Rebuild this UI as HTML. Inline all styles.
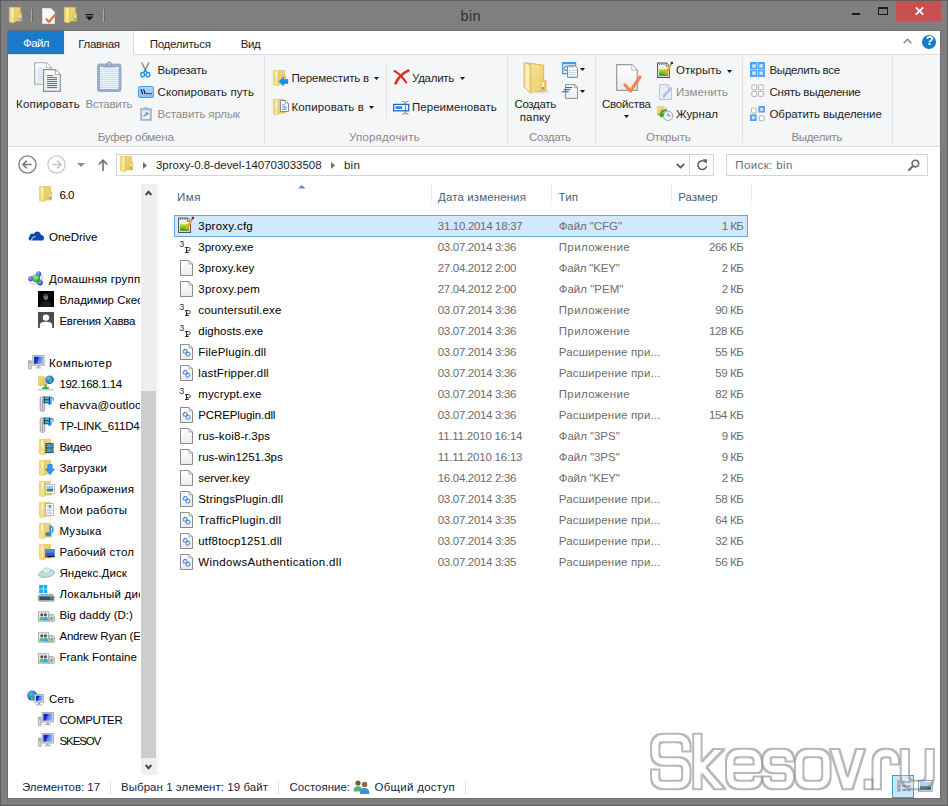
<!DOCTYPE html>
<html><head><meta charset="utf-8"><title>bin</title>
<style>
html,body{margin:0;padding:0;}
body{width:948px;height:806px;overflow:hidden;position:relative;background:#7f7f7f;font-family:"Liberation Sans",sans-serif;font-size:12px;}
.a{position:absolute;}
.t{position:absolute;white-space:pre;line-height:16px;height:16px;font-size:11.5px;}
svg{position:absolute;overflow:visible;}

</style></head>
<body>
<svg width="0" height="0" style="left:0;top:0"><defs>
<linearGradient id="gF" x1="0" y1="0" x2="1" y2="0"><stop offset="0" stop-color="#edd46a"/><stop offset="0.5" stop-color="#f6e89c"/><stop offset="1" stop-color="#e6c95c"/></linearGradient>
<linearGradient id="gB" x1="0" y1="0" x2="1" y2="1"><stop offset="0" stop-color="#f1dd86"/><stop offset="1" stop-color="#e2bd48"/></linearGradient>
<linearGradient id="gD" x1="0" y1="0" x2="0" y2="1"><stop offset="0" stop-color="#ffffff"/><stop offset="1" stop-color="#ececec"/></linearGradient>
<linearGradient id="gG" x1="0" y1="0" x2="0" y2="1"><stop offset="0" stop-color="#d9ec4a"/><stop offset="0.8" stop-color="#3cb52a"/><stop offset="1" stop-color="#0b5a10"/></linearGradient>
<linearGradient id="gS" x1="0" y1="0" x2="1" y2="0.35"><stop offset="0" stop-color="#0a16b4"/><stop offset="0.48" stop-color="#1a30d8"/><stop offset="0.58" stop-color="#5578ea"/><stop offset="1" stop-color="#8aa8f4"/></linearGradient>
<linearGradient id="gP" x1="0" y1="0" x2="0" y2="1"><stop offset="0" stop-color="#b4d8fc"/><stop offset="1" stop-color="#86bdf8"/></linearGradient>
<radialGradient id="gGl" cx="0.4" cy="0.35" r="0.7"><stop offset="0" stop-color="#6ab8ff"/><stop offset="1" stop-color="#0a3fc0"/></radialGradient>
<radialGradient id="gGr" cx="0.4" cy="0.35" r="0.7"><stop offset="0" stop-color="#9af08a"/><stop offset="1" stop-color="#0f8a1c"/></radialGradient>
<radialGradient id="gBl" cx="0.4" cy="0.35" r="0.7"><stop offset="0" stop-color="#9fb4ff"/><stop offset="1" stop-color="#1c34c4"/></radialGradient>
<linearGradient id="gF2" x1="0" y1="0" x2="1" y2="0"><stop offset="0" stop-color="#f3df8c"/><stop offset="0.5" stop-color="#fcf4cc"/><stop offset="1" stop-color="#f0d978"/></linearGradient>
<linearGradient id="gB2" x1="0" y1="0" x2="1" y2="1"><stop offset="0" stop-color="#f8ecb4"/><stop offset="0.6" stop-color="#eed377"/><stop offset="1" stop-color="#e6c25a"/></linearGradient>
</defs></svg>
<div class="a" style="left:0px;top:0px;width:948px;height:806px;background:#7f7f7f;box-shadow:inset 0 0 0 1px #5f5f5f;"></div>
<div class="a" style="left:7px;top:30px;width:934px;height:769px;background:#6f6f6f;"></div>
<div class="a" style="left:8px;top:31px;width:932px;height:767px;background:#fff;"></div>
<span class="t" style="left:460.55px;top:7.70px;color:#303030;letter-spacing:0.443px;font-size:14.38px;">bin</span>
<svg style="left:9px;top:7px" width="13" height="16" viewBox="0 0 13 16"><path d="M5.6 0.4 H11.4 V6 H12.6 V14 H5.6 Z" fill="url(#gB)" stroke="#dfbf4e" stroke-width="0.7"/><path d="M0.4 0.4 H6.3 V15 L3.6 15.7 L0.4 14.8 Z" fill="url(#gF)" stroke="#e5cb66" stroke-width="0.7"/><rect x="3" y="1.5" width="1.1" height="6" fill="#fffbe6" opacity="0.9"/><rect x="10.6" y="8" width="1.1" height="3" fill="#f4f7fb"/><rect x="10.6" y="10.6" width="1.1" height="2.2" fill="#3d9be0"/></svg>
<div class="a" style="left:31px;top:9px;width:1px;height:13px;background:#a8a8a8;"></div>
<div class="a" style="left:32px;top:9px;width:1px;height:13px;background:#666;"></div>
<svg style="left:42px;top:8px" width="14" height="16" viewBox="0 0 14 16"><path d="M0.5 0.5 H9 L12.5 4 V15.5 H0.5 Z" fill="#f7f7f7" stroke="#e8e8e8" stroke-width="0.8"/><path d="M4.5 11.2 L7 14 L12.8 7" fill="none" stroke="#e8753a" stroke-width="2.2" stroke-linecap="round" stroke-linejoin="round"/></svg>
<svg style="left:64px;top:7px" width="13" height="16" viewBox="0 0 13 16"><path d="M5.6 0.4 H11.4 V6 H12.6 V14 H5.6 Z" fill="url(#gB)" stroke="#dfbf4e" stroke-width="0.7"/><path d="M0.4 0.4 H6.3 V15 L3.6 15.7 L0.4 14.8 Z" fill="url(#gF)" stroke="#e5cb66" stroke-width="0.7"/><rect x="3" y="1.5" width="1.1" height="6" fill="#fffbe6" opacity="0.9"/><rect x="10.6" y="8" width="1.1" height="3" fill="#f4f7fb"/><rect x="10.6" y="10.6" width="1.1" height="2.2" fill="#3d9be0"/></svg>
<svg style="left:85px;top:14px" width="9" height="7" viewBox="0 0 9 7"><rect x="0.5" y="0" width="8" height="1.2" fill="#111"/><path d="M0.5 2.6 H8.5 L4.5 6.4 Z" fill="#111"/></svg>
<div class="a" style="left:103px;top:9px;width:1px;height:13px;background:#a8a8a8;"></div>
<div class="a" style="left:104px;top:9px;width:1px;height:13px;background:#666;"></div>
<div class="a" style="left:852px;top:13px;width:8px;height:2px;background:#1b1b1b;"></div>
<div class="a" style="left:878px;top:7px;width:10px;height:8px;box-sizing:border-box;border:1px solid #1b1b1b;border-top-width:2px;"></div>
<div class="a" style="left:896px;top:1px;width:45px;height:20px;background:#c75050;"></div>
<svg style="left:914.5px;top:7.3px" width="9" height="8" viewBox="0 0 9 8"><path d="M0.8 0.4 L8.2 7.6 M8.2 0.4 L0.8 7.6" stroke="#fff" stroke-width="1.8" fill="none"/></svg>
<div class="a" style="left:8px;top:31px;width:932px;height:23px;background:#fff;border-bottom:1px solid #dadbdc;"></div>
<div class="a" style="left:8px;top:31px;width:56px;height:23px;background:#1979ca;"></div>
<span class="t" style="left:23.00px;top:35.00px;color:#fff;letter-spacing:-0.570px;">Файл</span>
<div class="a" style="left:64px;top:31px;width:70px;height:24px;box-sizing:border-box;background:#f5f6f7;border-right:1px solid #dadbdc;border-left:1px solid #eceef0;"></div>
<span class="t" style="left:78.30px;top:36.00px;color:#1e1e1e;letter-spacing:-0.354px;">Главная</span>
<span class="t" style="left:149.70px;top:36.00px;color:#1e1e1e;letter-spacing:-0.252px;">Поделиться</span>
<span class="t" style="left:240.70px;top:36.00px;color:#1e1e1e;letter-spacing:-0.438px;">Вид</span>
<svg style="left:903px;top:38px" width="9" height="6" viewBox="0 0 9 6"><path d="M0.7 5.2 L4.5 1.3 L8.3 5.2" stroke="#8b8b8b" stroke-width="1.6" fill="none"/></svg>
<svg style="left:922px;top:35px" width="14" height="14" viewBox="0 0 14 14"><circle cx="7" cy="7" r="7" fill="#1979ca"/></svg>
<span class="t" style="left:925.80px;top:33.10px;color:#fff;letter-spacing:-0.180px;font-size:12.94px;font-weight:bold;">?</span>
<div class="a" style="left:8px;top:55px;width:932px;height:91px;background:#f5f6f7;border-bottom:1px solid #dadbdc;"></div>
<div class="a" style="left:264px;top:57px;width:1px;height:86px;background:#e1e2e3;"></div>
<div class="a" style="left:507px;top:57px;width:1px;height:86px;background:#e1e2e3;"></div>
<div class="a" style="left:595px;top:57px;width:1px;height:86px;background:#e1e2e3;"></div>
<div class="a" style="left:742px;top:57px;width:1px;height:86px;background:#e1e2e3;"></div>
<div class="a" style="left:892px;top:57px;width:1px;height:86px;background:#e1e2e3;"></div>
<div class="a" style="left:386px;top:64px;width:1px;height:54px;background:#e1e2e3;"></div>
<svg style="left:34px;top:62px" width="27" height="30" viewBox="0 0 27 30"><path d="M0.7 0.7 H12.5 L17.3 5.5 V22.3 H0.7 Z" fill="url(#gD)" stroke="#a8a8a8" stroke-width="1.1"/><path d="M12.3 0.7 V5.7 H17.3" fill="#fff" stroke="#b4b4b4" stroke-width="0.9"/><rect x="3.5" y="5.6" width="6" height="0.9" fill="#c5d9ee"/><rect x="3.5" y="7.6" width="6" height="0.9" fill="#c5d9ee"/><rect x="3.5" y="9.6" width="6" height="0.9" fill="#c5d9ee"/><rect x="3.5" y="11.6" width="6" height="0.9" fill="#c5d9ee"/><rect x="3.5" y="13.6" width="6" height="0.9" fill="#c5d9ee"/><rect x="3.5" y="15.6" width="6" height="0.9" fill="#c5d9ee"/><rect x="3.5" y="17.6" width="6" height="0.9" fill="#c5d9ee"/><path d="M9.6 7.7 H21.5 L26.3 12.5 V29.3 H9.6 Z" fill="url(#gD)" stroke="#8e8e8e" stroke-width="1.2"/><path d="M21.3 7.7 V12.7 H26.3" fill="#fff" stroke="#9a9a9a" stroke-width="0.9"/><rect x="13" y="13" width="6" height="1.1" fill="#3b82c9"/><rect x="13" y="15" width="10" height="1.1" fill="#3b82c9"/><rect x="13" y="17" width="10" height="1.1" fill="#3b82c9"/><rect x="13" y="19" width="10" height="1.1" fill="#3b82c9"/><rect x="13" y="21" width="10" height="1.1" fill="#3b82c9"/><rect x="13" y="23" width="10" height="1.1" fill="#3b82c9"/><rect x="13" y="25" width="10" height="1.1" fill="#3b82c9"/></svg>
<svg style="left:97px;top:61px" width="25" height="31" viewBox="0 0 25 31"><rect x="0.5" y="3" width="23.5" height="27.5" rx="1.8" fill="#9badca" stroke="#90a3c2" stroke-width="0.8"/><rect x="3" y="6" width="18.5" height="22" fill="#eef3fb"/><rect x="3" y="8" width="18.5" height="0.9" fill="#cdd9ec"/><rect x="3" y="10" width="18.5" height="0.9" fill="#cdd9ec"/><rect x="3" y="12" width="18.5" height="0.9" fill="#cdd9ec"/><rect x="3" y="14" width="18.5" height="0.9" fill="#cdd9ec"/><rect x="3" y="16" width="18.5" height="0.9" fill="#cdd9ec"/><rect x="3" y="18" width="18.5" height="0.9" fill="#cdd9ec"/><rect x="3" y="20" width="18.5" height="0.9" fill="#cdd9ec"/><rect x="3" y="22" width="18.5" height="0.9" fill="#cdd9ec"/><rect x="3" y="24" width="18.5" height="0.9" fill="#cdd9ec"/><rect x="3" y="26" width="18.5" height="0.9" fill="#cdd9ec"/><path d="M6 6.3 H18.5 V5 H15.5 C15.5 2.5 14 0.8 12.2 0.8 C10.4 0.8 9 2.5 9 5 H6 Z" fill="#8d9fbe" stroke="#a9b7d1" stroke-width="0.6"/><circle cx="12.2" cy="3" r="1" fill="#dfe6f2"/></svg>
<span class="t" style="left:16.00px;top:96.00px;color:#1e1e1e;letter-spacing:0.208px;">Копировать</span>
<span class="t" style="left:85.60px;top:96.00px;color:#8d8d8d;letter-spacing:-0.281px;">Вставить</span>
<svg style="left:140px;top:62px" width="11" height="16" viewBox="0 0 11 16"><path d="M1.6 0.3 L6.2 9.6 M9 0.3 L4.4 9.6" stroke="#8b9097" stroke-width="1.5" fill="none"/><ellipse cx="2.6" cy="12.6" rx="1.9" ry="2.3" fill="none" stroke="#1d8de0" stroke-width="1.3"/><ellipse cx="7.9" cy="12.6" rx="1.9" ry="2.3" fill="none" stroke="#1d8de0" stroke-width="1.3"/><path d="M3.5 10.6 L5.3 8 L7 10.6" stroke="#1d8de0" stroke-width="1.3" fill="none"/></svg>
<span class="t" style="left:157.50px;top:62.00px;color:#1e1e1e;letter-spacing:-0.207px;">Вырезать</span>
<svg style="left:138px;top:86px" width="16" height="12" viewBox="0 0 16 12"><rect x="0.5" y="0.5" width="15" height="11" rx="1.6" fill="url(#gP)" stroke="#4aa0ee" stroke-width="1"/><path d="M3 3.2 L4.6 8 M5.6 3.2 L7.2 8" stroke="#111" stroke-width="1.1"/><rect x="8.3" y="7" width="1.2" height="1.2" fill="#111"/><rect x="10.4" y="7" width="1.2" height="1.2" fill="#111"/><rect x="12.5" y="7" width="1.2" height="1.2" fill="#111"/></svg>
<span class="t" style="left:157.50px;top:84.00px;color:#1e1e1e;letter-spacing:0.086px;">Скопировать путь</span>
<svg style="left:140px;top:107px" width="12" height="14" viewBox="0 0 12 14"><rect x="0.6" y="1.6" width="10.8" height="11.8" fill="#a9b6cf" stroke="#9fadc8" stroke-width="0.6"/><rect x="2.2" y="3.3" width="7.6" height="8.6" fill="#eef2f9"/><rect x="3.8" y="0.3" width="4.4" height="2" fill="#a9b6cf"/><path d="M4 10 C4 7.5 5.5 6.6 7.6 6.6 M5.6 5 L8.2 6.6 L5.8 8.4" stroke="#8c97ad" stroke-width="1.2" fill="none"/></svg>
<span class="t" style="left:157.50px;top:106.00px;color:#8d8d8d;letter-spacing:-0.121px;">Вставить ярлык</span>
<span class="t" style="left:97.70px;top:129.00px;color:#8a8a8a;letter-spacing:-0.180px;">Буфер обмена</span>
<svg style="left:273px;top:70px" width="13" height="16" viewBox="0 0 13 16"><path d="M5.6 0.4 H11.4 V6 H12.6 V14 H5.6 Z" fill="url(#gB)" stroke="#dfbf4e" stroke-width="0.7"/><path d="M0.4 0.4 H6.3 V15 L3.6 15.7 L0.4 14.8 Z" fill="url(#gF)" stroke="#e5cb66" stroke-width="0.7"/><rect x="3" y="1.5" width="1.1" height="6" fill="#fffbe6" opacity="0.9"/><rect x="10.6" y="8" width="1.1" height="3" fill="#f4f7fb"/><rect x="10.6" y="10.6" width="1.1" height="2.2" fill="#3d9be0"/></svg>
<svg style="left:279px;top:77px" width="9" height="9" viewBox="0 0 9 9"><path d="M0 4.5 L4.5 0 V2.5 H9 V6.5 H4.5 V9 Z" fill="#1e8de6" stroke="#1576cc" stroke-width="0.5"/></svg>
<span class="t" style="left:291.50px;top:70.00px;color:#1e1e1e;letter-spacing:-0.174px;">Переместить в</span>
<svg style="left:373.5px;top:77px" width="5" height="3" viewBox="0 0 5 3"><path d="M0 0 H5 L2.5 3 Z" fill="#111"/></svg>
<svg style="left:273px;top:99px" width="13" height="16" viewBox="0 0 13 16"><path d="M5.6 0.4 H11.4 V6 H12.6 V14 H5.6 Z" fill="url(#gB)" stroke="#dfbf4e" stroke-width="0.7"/><path d="M0.4 0.4 H6.3 V15 L3.6 15.7 L0.4 14.8 Z" fill="url(#gF)" stroke="#e5cb66" stroke-width="0.7"/><rect x="3" y="1.5" width="1.1" height="6" fill="#fffbe6" opacity="0.9"/><rect x="10.6" y="8" width="1.1" height="3" fill="#f4f7fb"/><rect x="10.6" y="10.6" width="1.1" height="2.2" fill="#3d9be0"/></svg>
<svg style="left:279.5px;top:99.5px" width="9" height="12" viewBox="0 0 9 12"><path d="M0.5 0.5 H5.5 L8.5 3.5 V11.5 H0.5 Z" fill="#fff" stroke="#8a8a8a" stroke-width="1"/><path d="M5.3 0.5 V3.7 H8.5" fill="none" stroke="#9a9a9a" stroke-width="0.8"/><rect x="2.3" y="4.4" width="2.4" height="1" fill="#3b82c9"/><rect x="2.3" y="6.5" width="4.4" height="1" fill="#3b82c9"/><rect x="2.3" y="8.6" width="4.4" height="1" fill="#3b82c9"/></svg>
<span class="t" style="left:291.50px;top:99.00px;color:#1e1e1e;letter-spacing:0.105px;">Копировать в</span>
<svg style="left:368.5px;top:106px" width="5" height="3" viewBox="0 0 5 3"><path d="M0 0 H5 L2.5 3 Z" fill="#111"/></svg>
<svg style="left:394px;top:70px" width="15" height="14" viewBox="0 0 15 14"><path d="M0.5 1 C4 2.6 9 8 12.3 12.5" stroke="#e02a1c" stroke-width="2" fill="none" stroke-linecap="round"/><path d="M14.3 0.6 C8 3.5 3.5 9 1.6 13.4" stroke="#e02a1c" stroke-width="2.6" fill="none" stroke-linecap="round"/></svg>
<span class="t" style="left:412.00px;top:70.00px;color:#1e1e1e;letter-spacing:-0.272px;">Удалить</span>
<svg style="left:459.5px;top:77px" width="5" height="3" viewBox="0 0 5 3"><path d="M0 0 H5 L2.5 3 Z" fill="#111"/></svg>
<svg style="left:393px;top:101px" width="17" height="14" viewBox="0 0 17 14"><rect x="0.7" y="3.4" width="15" height="6.4" fill="#fff" stroke="#1a6cc0" stroke-width="1.3"/><rect x="2.5" y="5.2" width="6.8" height="2.8" fill="#2e93e0"/><path d="M12.4 1 V12.4 M9.3 0.3 C11 0.5 12 0.8 12.4 1.6 C12.8 0.8 13.8 0.5 15.5 0.3 M9.3 13.2 C11 13 12 12.7 12.4 11.8 C12.8 12.7 13.8 13 15.5 13.2" stroke="#7a7a7a" stroke-width="1" fill="none"/></svg>
<span class="t" style="left:412.00px;top:99.00px;color:#1e1e1e;letter-spacing:0.030px;">Переименовать</span>
<span class="t" style="left:349.00px;top:129.00px;color:#8a8a8a;letter-spacing:0.233px;">Упорядочить</span>
<svg style="left:523px;top:62px" width="24" height="32" viewBox="0 0 24 32"><ellipse cx="19" cy="29.5" rx="8" ry="2.2" fill="#cfcfcf" opacity="0.55"/><path d="M3.8 0.9 L20.7 3.2 V18.6 H22.9 V28.8 L8 30.2 Z" fill="url(#gB2)" stroke="#ddb146" stroke-width="0.9"/><path d="M1.1 0.6 L7.9 2.8 V31.2 L1.1 25.2 Z" fill="url(#gF2)" stroke="#ddb146" stroke-width="0.9"/><path d="M7.9 19.2 H16.3 V29.4 L7.9 30.2 Z" fill="#efd87c" opacity="0.7"/><rect x="19.5" y="20.3" width="1.3" height="5" fill="#fff"/><rect x="19.5" y="25" width="1.3" height="2" fill="#2f86e0"/></svg>
<span class="t" style="left:514.40px;top:96.00px;color:#1e1e1e;letter-spacing:-0.303px;">Создать</span>
<span class="t" style="left:519.65px;top:109.00px;color:#1e1e1e;letter-spacing:0.187px;">папку</span>
<svg style="left:562px;top:62px" width="16" height="16" viewBox="0 0 16 16"><rect x="0.6" y="0.6" width="13" height="11" fill="#e4f1fc" stroke="#3f9be6" stroke-width="1.2"/><rect x="0.6" y="0.6" width="13" height="1.6" fill="#3f9be6"/><circle cx="4" cy="6.5" r="2" fill="none" stroke="#2a74c8" stroke-width="0.9"/><path d="M5.5 3.8 H13 L15.5 6 V15.4 H5.5 Z" fill="#fff" stroke="#8c8c8c" stroke-width="1"/><rect x="6.6" y="4" width="1" height="1.4" fill="#777"/><rect x="8.6" y="4" width="1" height="1.4" fill="#777"/><rect x="10.6" y="4" width="1" height="1.4" fill="#777"/><rect x="6.5" y="8" width="8" height="0.9" fill="#bcd0ea"/><rect x="6.5" y="10" width="8" height="0.9" fill="#bcd0ea"/><rect x="6.5" y="12" width="8" height="0.9" fill="#bcd0ea"/><rect x="6.5" y="14" width="8" height="0.9" fill="#bcd0ea"/></svg>
<svg style="left:580.3px;top:68px" width="5" height="3" viewBox="0 0 5 3"><path d="M0 0 H5 L2.5 3 Z" fill="#111"/></svg>
<svg style="left:562px;top:84px" width="16" height="15" viewBox="0 0 16 15"><path d="M3.6 0.6 H12.6 L15.5 3.4 V14.4 H3.6 Z" fill="url(#gD)" stroke="#8c8c8c" stroke-width="1"/><path d="M12.4 0.6 V3.6 H15.5" fill="none" stroke="#9a9a9a" stroke-width="0.8"/><rect x="3.6" y="3" width="6.6" height="1.1" fill="#1b6fe0"/><rect x="1.8" y="5.1" width="6.6" height="1.1" fill="#1b6fe0"/><rect x="0" y="7.2" width="6.6" height="1.1" fill="#1b6fe0"/></svg>
<svg style="left:580.3px;top:90px" width="5" height="3" viewBox="0 0 5 3"><path d="M0 0 H5 L2.5 3 Z" fill="#111"/></svg>
<span class="t" style="left:529.00px;top:129.00px;color:#8a8a8a;letter-spacing:-0.274px;">Создать</span>
<svg style="left:616px;top:64px" width="26" height="29" viewBox="0 0 26 29"><path d="M0.7 0.7 H16 L21.3 6 V26.3 H0.7 Z" fill="url(#gD)" stroke="#9a9a9a" stroke-width="1.2"/><path d="M15.8 0.7 V6.2 H21.3" fill="#fff" stroke="#b0b0b0" stroke-width="0.9"/><path d="M9 21 L14.5 27 L24 13" fill="none" stroke="#ee8850" stroke-width="3.2" stroke-linecap="round" stroke-linejoin="round"/></svg>
<span class="t" style="left:602.00px;top:96.00px;color:#1e1e1e;letter-spacing:-0.237px;">Свойства</span>
<svg style="left:624px;top:115.3px" width="5" height="3" viewBox="0 0 5 3"><path d="M0 0 H5 L2.5 3 Z" fill="#111"/></svg>
<svg style="left:657px;top:62px" width="16" height="16" viewBox="0 0 16 16"><path d="M0.6 1 H9.5 L12.4 4 V15.4 H0.6 Z" fill="#fff" stroke="#555" stroke-width="1.1"/><path d="M9.2 1 V4.2 H12.4" fill="#fff" stroke="#555" stroke-width="0.9"/><rect x="2" y="1.6" width="1.1" height="1.3" fill="#555"/><rect x="4.2" y="1.6" width="1.1" height="1.3" fill="#555"/><rect x="6.4" y="1.6" width="1.1" height="1.3" fill="#555"/><rect x="2.3" y="4.6" width="5.5" height="0.8" fill="#c9ced6"/><rect x="2" y="6.6" width="9" height="7" fill="url(#gG)"/><path d="M8.3 12.6 L13.3 3.6" stroke="#f5a500" stroke-width="2.2"/><path d="M8.6 12.9 L7.6 14 L9.3 13.3 Z" fill="#5a3a10"/><path d="M13.5 3.3 L14.4 1.7" stroke="#7a8aa8" stroke-width="1.6"/><rect x="13.8" y="-0.2" width="2.2" height="2.2" fill="#a00010"/></svg>
<span class="t" style="left:676.00px;top:62.00px;color:#1e1e1e;letter-spacing:0.061px;">Открыть</span>
<svg style="left:727.3px;top:69.5px" width="5" height="3" viewBox="0 0 5 3"><path d="M0 0 H5 L2.5 3 Z" fill="#111"/></svg>
<svg style="left:659px;top:84px" width="14" height="16" viewBox="0 0 14 16"><path d="M0.5 0.5 H9 L12.5 4 V15.5 H0.5 Z" fill="#e6edfa" stroke="#b5c3de" stroke-width="0.9"/><path d="M8.8 0.5 V4.2 H12.5" fill="none" stroke="#b5c3de" stroke-width="0.8"/><path d="M4.5 12.5 L11.8 4.3" stroke="#a9b8d6" stroke-width="2"/><path d="M4.7 12.3 L3.6 14 L5.6 13.2 Z" fill="#98a8c8"/></svg>
<span class="t" style="left:676.00px;top:84.00px;color:#8d8d8d;letter-spacing:0.016px;">Изменить</span>
<svg style="left:657px;top:106px" width="16" height="15" viewBox="0 0 16 15"><path d="M0.4 0.4 H7 V2 H8.6 V9 H0.4 Z" fill="url(#gB)" stroke="#e2c65c" stroke-width="0.7"/><path d="M6 1.8 H9.6 V4 H6 Z" fill="#fff" stroke="#c8c8c8" stroke-width="0.5"/><circle cx="11" cy="9.8" r="4.7" fill="#f2f6f8" stroke="#9aa7ad" stroke-width="1"/><path d="M11 6.8 V9.8 H13.6" stroke="#6d7b82" stroke-width="1" fill="none"/><path d="M9.6 4.6 C7 4.4 5.6 6 5.4 8 H7.3 L4.4 11.6 L1.6 8 H3.4 C3.6 5 6 3 9.6 3.4 Z" fill="#2db52a" stroke="#1a8a1c" stroke-width="0.4"/></svg>
<span class="t" style="left:676.00px;top:106.00px;color:#1e1e1e;letter-spacing:0.005px;">Журнал</span>
<span class="t" style="left:646.00px;top:129.00px;color:#8a8a8a;letter-spacing:-0.082px;">Открыть</span>
<svg style="left:750px;top:62px" width="15" height="15" viewBox="0 0 15 15"><rect x="0" y="0" width="15" height="15" fill="#4ea3f4"/><rect x="2.2" y="2.2" width="3.4" height="3.4" fill="#cfe6fc"/><rect x="2.2" y="9.4" width="3.4" height="3.4" fill="#cfe6fc"/><rect x="9.4" y="2.2" width="3.4" height="3.4" fill="#cfe6fc"/><rect x="9.4" y="9.4" width="3.4" height="3.4" fill="#cfe6fc"/><rect x="6.9" y="0" width="1.2" height="15" fill="#9fcdf9"/><rect x="0" y="6.9" width="15" height="1.2" fill="#9fcdf9"/></svg>
<span class="t" style="left:769.50px;top:62.00px;color:#1e1e1e;letter-spacing:-0.348px;">Выделить все</span>
<svg style="left:751px;top:84px" width="13" height="13" viewBox="0 0 13 13"><rect x="0.9" y="0.9" width="4.8" height="4.8" fill="#fff" stroke="#a9a9a9" stroke-width="0.9" rx="0.6"/><rect x="0.9" y="7.5" width="4.8" height="4.8" fill="#fff" stroke="#a9a9a9" stroke-width="0.9" rx="0.6"/><rect x="7.5" y="0.9" width="4.8" height="4.8" fill="#fff" stroke="#a9a9a9" stroke-width="0.9" rx="0.6"/><rect x="7.5" y="7.5" width="4.8" height="4.8" fill="#fff" stroke="#a9a9a9" stroke-width="0.9" rx="0.6"/></svg>
<span class="t" style="left:769.50px;top:84.00px;color:#1e1e1e;letter-spacing:-0.248px;">Снять выделение</span>
<svg style="left:750px;top:106px" width="16" height="16" viewBox="0 0 16 16"><rect x="1.5" y="2.1" width="4.8" height="4.8" fill="#fff" stroke="#a9a9a9" stroke-width="0.9" rx="0.6"/><rect x="8.4" y="0" width="6.6" height="6.6" fill="#4ea3f4"/><rect x="10.200000000000001" y="1.8" width="3" height="3" fill="#cfe6fc"/><rect x="0" y="8.4" width="6.6" height="6.6" fill="#4ea3f4"/><rect x="1.8" y="10.200000000000001" width="3" height="3" fill="#cfe6fc"/><rect x="9.3" y="9.9" width="4.8" height="4.8" fill="#fff" stroke="#a9a9a9" stroke-width="0.9" rx="0.6"/></svg>
<span class="t" style="left:769.50px;top:106.00px;color:#1e1e1e;letter-spacing:-0.072px;">Обратить выделение</span>
<span class="t" style="left:791.40px;top:129.00px;color:#8a8a8a;letter-spacing:-0.308px;">Выделить</span>
<svg style="left:18px;top:155px" width="19" height="19" viewBox="0 0 19 19"><circle cx="9.5" cy="9.5" r="8.6" fill="#fff" stroke="#7b7b7b" stroke-width="1.3"/><path d="M13.6 9.5 H5.2 M8.8 5.6 L5 9.5 L8.8 13.4" stroke="#7b7b7b" stroke-width="1.6" fill="none"/></svg>
<svg style="left:46.5px;top:155px" width="19" height="19" viewBox="0 0 19 19"><circle cx="9.5" cy="9.5" r="8.6" fill="#fff" stroke="#c8c8c8" stroke-width="1.3"/><path d="M5.4 9.5 H13.8 M10.2 5.6 L14 9.5 L10.2 13.4" stroke="#c8c8c8" stroke-width="1.6" fill="none"/></svg>
<svg style="left:77px;top:163px" width="8" height="4" viewBox="0 0 8 4"><path d="M0 0 H8 L4 4 Z" fill="#8a8a8a"/></svg>
<svg style="left:98px;top:159px" width="10" height="12" viewBox="0 0 10 12"><path d="M5 1.2 V12 M0.8 5.5 L5 1.2 L9.2 5.5" stroke="#6e6e6e" stroke-width="1.6" fill="none"/></svg>
<div class="a" style="left:116px;top:154px;width:598px;height:22px;box-sizing:border-box;border:1px solid #d5d5d5;background:#fff;"></div>
<div class="a" style="left:689px;top:155px;width:1px;height:20px;background:#d5d5d5;"></div>
<svg style="left:120px;top:156px" width="13" height="16" viewBox="0 0 13 16"><path d="M5.6 0.4 H11.4 V6 H12.6 V14 H5.6 Z" fill="url(#gB)" stroke="#dfbf4e" stroke-width="0.7"/><path d="M0.4 0.4 H6.3 V15 L3.6 15.7 L0.4 14.8 Z" fill="url(#gF)" stroke="#e5cb66" stroke-width="0.7"/><rect x="3" y="1.5" width="1.1" height="6" fill="#fffbe6" opacity="0.9"/><rect x="10.6" y="8" width="1.1" height="3" fill="#f4f7fb"/><rect x="10.6" y="10.6" width="1.1" height="2.2" fill="#3d9be0"/></svg>
<svg style="left:143px;top:162px" width="4" height="7" viewBox="0 0 4 7"><path d="M0 0 L4 3.5 L0 7 Z" fill="#707070"/></svg>
<span class="t" style="left:156.00px;top:157.00px;color:#1e1e1e;letter-spacing:-0.025px;">3proxy-0.8-devel-140703033508</span>
<svg style="left:331px;top:162px" width="4" height="7" viewBox="0 0 4 7"><path d="M0 0 L4 3.5 L0 7 Z" fill="#707070"/></svg>
<span class="t" style="left:344.00px;top:157.00px;color:#1e1e1e;letter-spacing:0.214px;">bin</span>
<svg style="left:675.5px;top:163px" width="9" height="6" viewBox="0 0 9 6"><path d="M0.8 0.8 L4.5 4.6 L8.2 0.8" stroke="#555" stroke-width="1.7" fill="none"/></svg>
<svg style="left:696px;top:159px" width="12" height="12" viewBox="0 0 12 12"><path d="M9.6 3.2 A4.4 4.4 0 1 0 10.6 7" stroke="#5f5f5f" stroke-width="1.5" fill="none"/><path d="M6.6 0.2 H11 V4.6 Z" fill="#5f5f5f"/></svg>
<div class="a" style="left:726px;top:154px;width:202px;height:22px;box-sizing:border-box;border:1px solid #d5d5d5;background:#fff;"></div>
<span class="t" style="left:735.30px;top:157.00px;color:#6d6d6d;letter-spacing:0.379px;">Поиск: bin</span>
<svg style="left:908px;top:159px" width="12" height="12" viewBox="0 0 12 12"><circle cx="7.4" cy="4.6" r="3.3" fill="none" stroke="#6a6a6a" stroke-width="1.6"/><path d="M5 7 L1 11" stroke="#6a6a6a" stroke-width="2.1" stroke-linecap="round"/></svg>
<div class="a" style="left:8px;top:184px;width:132.4px;height:591px;overflow:hidden;">
<svg style="left:31px;top:2px" width="13" height="16" viewBox="0 0 13 16"><path d="M5.6 0.4 H11.4 V6 H12.6 V14 H5.6 Z" fill="url(#gB)" stroke="#dfbf4e" stroke-width="0.7"/><path d="M0.4 0.4 H6.3 V15 L3.6 15.7 L0.4 14.8 Z" fill="url(#gF)" stroke="#e5cb66" stroke-width="0.7"/><rect x="3" y="1.5" width="1.1" height="6" fill="#fffbe6" opacity="0.9"/><rect x="10.6" y="8" width="1.1" height="3" fill="#f4f7fb"/><rect x="10.6" y="10.6" width="1.1" height="2.2" fill="#3d9be0"/></svg><span class="t" style="left:51.40px;top:3.00px;color:#000;letter-spacing:-0.467px;">6.0</span><svg style="left:20px;top:46px" width="17" height="11" viewBox="0 0 17 11"><path d="M3.2 10.6 C0.6 10.6 -0.4 7.4 1.9 6.2 C1.6 3.6 4.6 2.6 5.8 4.2 C7 0.2 12.6 0.8 12.9 5 C16.6 4.6 17.2 10.6 13.8 10.6 Z" fill="#0a49b0"/><path d="M3.6 11 C3.4 8.2 5.2 6.3 7.6 6.8" stroke="#fff" stroke-width="0.9" fill="none"/></svg><span class="t" style="left:41.00px;top:45.00px;color:#000;letter-spacing:-0.010px;">OneDrive</span><svg style="left:20px;top:87px" width="16" height="15" viewBox="0 0 16 15"><ellipse cx="8" cy="8" rx="6.6" ry="4.6" fill="none" stroke="#b8cdec" stroke-width="1.2" transform="rotate(-25 8 8)"/><circle cx="10.6" cy="2.8" r="2.6" fill="url(#gBl)"/><circle cx="2.8" cy="7.6" r="2.7" fill="url(#gBl)"/><circle cx="12" cy="11.6" r="2.9" fill="url(#gBl)"/><circle cx="8.4" cy="7.6" r="3.9" fill="url(#gGr)"/></svg><span class="t" style="left:41.00px;top:87.00px;color:#000;letter-spacing:0.206px;">Домашняя группа</span><svg style="left:30px;top:107px" width="16" height="16" viewBox="0 0 16 16"><rect width="16" height="16" fill="#050505"/><ellipse cx="7.8" cy="6" rx="2.3" ry="3" fill="#8a6e62"/><path d="M2 16 C3 10.5 6 10 8 10 C10 10 13 10.5 14 16 Z" fill="#1e1c1c"/><ellipse cx="7.8" cy="4" rx="2.2" ry="1.2" fill="#4a4038"/></svg><span class="t" style="left:51.40px;top:108.00px;color:#000;letter-spacing:-0.005px;">Владимир Скесов</span><svg style="left:30px;top:128px" width="16" height="16" viewBox="0 0 16 16"><rect width="16" height="16" fill="#4c4c4c"/><circle cx="8" cy="5.6" r="3.2" fill="#fff"/><path d="M1.8 16 V13.5 C1.8 10.6 4 9.8 8 9.8 C12 9.8 14.2 10.6 14.2 13.5 V16 Z" fill="#fff"/></svg><span class="t" style="left:51.40px;top:129.00px;color:#000;letter-spacing:-0.237px;">Евгения Хавва</span><svg style="left:20px;top:171px" width="17" height="15" viewBox="0 0 17 15"><rect x="0.5" y="5.5" width="2.8" height="8.6" rx="0.8" fill="#d4d7db" stroke="#8c9096" stroke-width="0.7"/><rect x="1.2" y="6.6" width="1.4" height="1.3" fill="#35c035"/><g transform="translate(4.3,0)"><rect x="0.5" y="0.5" width="11.4" height="9.8" fill="#d9dde2" stroke="#a4a9b0" stroke-width="0.9"/><rect x="1.8" y="1.7" width="8.8" height="7.200000000000001" fill="url(#gS)"/><rect x="5.2" y="10.8" width="2" height="1.6" fill="#9a9fa6"/><rect x="3.2" y="12.3" width="6" height="1.1" fill="#a8adb4"/></g></svg><span class="t" style="left:41.00px;top:171.00px;color:#000;letter-spacing:0.408px;">Компьютер</span><svg style="left:30px;top:191px" width="17" height="16" viewBox="0 0 17 16"><path d="M0.4 1.4 H6 V2.4 H9 V10.4 H0.4 Z" fill="url(#gB)" stroke="#e2c65c" stroke-width="0.7"/><circle cx="11.6" cy="4.8" r="4.2" fill="url(#gGl)"/><path d="M9 3.4 C10 1.6 12 1.6 12 3 C11.6 4.4 9.8 4.8 9 3.4 Z M11.4 6.2 C12.6 5.4 14.4 5.8 14 7.4 C13 8.4 11.8 7.8 11.4 6.2 Z" fill="#3fe050"/><rect x="6.6" y="9.8" width="2" height="3" fill="#18b050"/><rect x="4.4" y="12.2" width="6.4" height="1.8" fill="#18b050"/><rect x="0" y="14.2" width="15.6" height="1.2" fill="#b9bec4"/></svg><span class="t" style="left:51.40px;top:192.00px;color:#000;letter-spacing:-0.405px;">192.168.1.14</span><svg style="left:30px;top:212px" width="17" height="16" viewBox="0 0 17 16"><rect x="2.2" y="0.8" width="4.6" height="14.6" rx="2" fill="#d9dbde" stroke="#8a8d92" stroke-width="0.8"/><rect x="4" y="5" width="1" height="9" fill="#9a9da2"/><rect x="5.6" y="0.6" width="6.6" height="6.6" fill="#2a2e38"/><rect x="6.8" y="1.2" width="4.2" height="2.2" fill="#49b6ea"/><rect x="6.8" y="4.2" width="4.2" height="2.2" fill="#49b6ea"/><rect x="4.2" y="3.2" width="1.4" height="1.2" fill="#35c035"/><path d="M13 1 V7.2" stroke="#1e8de6" stroke-width="1.2"/><path d="M13 1 C14.8 1.6 15.8 2.8 15 4.6" stroke="#1e8de6" stroke-width="1.1" fill="none"/><ellipse cx="11.6" cy="7.6" rx="1.8" ry="1.3" fill="#1e8de6"/></svg><span class="t" style="left:51.40px;top:213.00px;color:#000;letter-spacing:0.169px;">ehavva@outlook.com</span><svg style="left:30px;top:233px" width="17" height="16" viewBox="0 0 17 16"><rect x="2.2" y="0.8" width="4.6" height="14.6" rx="2" fill="#d9dbde" stroke="#8a8d92" stroke-width="0.8"/><rect x="4" y="5" width="1" height="9" fill="#9a9da2"/><rect x="5.6" y="0.6" width="6.6" height="6.6" fill="#2a2e38"/><rect x="6.8" y="1.2" width="4.2" height="2.2" fill="#49b6ea"/><rect x="6.8" y="4.2" width="4.2" height="2.2" fill="#49b6ea"/><rect x="4.2" y="3.2" width="1.4" height="1.2" fill="#35c035"/><path d="M13 1 V7.2" stroke="#1e8de6" stroke-width="1.2"/><path d="M13 1 C14.8 1.6 15.8 2.8 15 4.6" stroke="#1e8de6" stroke-width="1.1" fill="none"/><ellipse cx="11.6" cy="7.6" rx="1.8" ry="1.3" fill="#1e8de6"/></svg><span class="t" style="left:51.40px;top:234.00px;color:#000;letter-spacing:-0.279px;">TP-LINK_611D4E</span><svg style="left:31px;top:255px" width="13" height="16" viewBox="0 0 13 16"><path d="M5.6 0.4 H11.4 V6 H12.6 V14 H5.6 Z" fill="url(#gB)" stroke="#dfbf4e" stroke-width="0.7"/><path d="M0.4 0.4 H6.3 V15 L3.6 15.7 L0.4 14.8 Z" fill="url(#gF)" stroke="#e5cb66" stroke-width="0.7"/><rect x="3" y="1.5" width="1.1" height="6" fill="#fffbe6" opacity="0.9"/><rect x="10.6" y="8" width="1.1" height="3" fill="#f4f7fb"/><rect x="10.6" y="10.6" width="1.1" height="2.2" fill="#3d9be0"/></svg><svg style="left:37px;top:259px" width="9" height="10" viewBox="0 0 9 10"><rect x="0" y="0" width="8.6" height="10" fill="#3a3e48"/><rect x="1.8" y="0.8" width="5" height="3.8" fill="#3aa0e0"/><rect x="1.8" y="5.4" width="5" height="3.8" fill="#3aa0e0"/><rect x="0.3" y="0.7" width="0.9" height="1.2" fill="#ddd"/><rect x="7.4" y="0.7" width="0.9" height="1.2" fill="#ddd"/><rect x="0.3" y="3.0" width="0.9" height="1.2" fill="#ddd"/><rect x="7.4" y="3.0" width="0.9" height="1.2" fill="#ddd"/><rect x="0.3" y="5.3" width="0.9" height="1.2" fill="#ddd"/><rect x="7.4" y="5.3" width="0.9" height="1.2" fill="#ddd"/><rect x="0.3" y="7.6" width="0.9" height="1.2" fill="#ddd"/><rect x="7.4" y="7.6" width="0.9" height="1.2" fill="#ddd"/></svg><span class="t" style="left:51.40px;top:255.00px;color:#000;letter-spacing:-0.262px;">Видео</span><svg style="left:31px;top:276px" width="13" height="16" viewBox="0 0 13 16"><path d="M5.6 0.4 H11.4 V6 H12.6 V14 H5.6 Z" fill="url(#gB)" stroke="#dfbf4e" stroke-width="0.7"/><path d="M0.4 0.4 H6.3 V15 L3.6 15.7 L0.4 14.8 Z" fill="url(#gF)" stroke="#e5cb66" stroke-width="0.7"/><rect x="3" y="1.5" width="1.1" height="6" fill="#fffbe6" opacity="0.9"/><rect x="10.6" y="8" width="1.1" height="3" fill="#f4f7fb"/><rect x="10.6" y="10.6" width="1.1" height="2.2" fill="#3d9be0"/></svg><svg style="left:37px;top:280px" width="10" height="11" viewBox="0 0 10 11"><path d="M2.8 0.5 H7.2 V5 H9.6 L5 10.4 L0.4 5 H2.8 Z" fill="#2f97ee" stroke="#1b78d0" stroke-width="0.6"/></svg><span class="t" style="left:51.40px;top:276.00px;color:#000;letter-spacing:0.177px;">Загрузки</span><svg style="left:31px;top:297px" width="13" height="16" viewBox="0 0 13 16"><path d="M5.6 0.4 H11.4 V6 H12.6 V14 H5.6 Z" fill="url(#gB)" stroke="#dfbf4e" stroke-width="0.7"/><path d="M0.4 0.4 H6.3 V15 L3.6 15.7 L0.4 14.8 Z" fill="url(#gF)" stroke="#e5cb66" stroke-width="0.7"/><rect x="3" y="1.5" width="1.1" height="6" fill="#fffbe6" opacity="0.9"/><rect x="10.6" y="8" width="1.1" height="3" fill="#f4f7fb"/><rect x="10.6" y="10.6" width="1.1" height="2.2" fill="#3d9be0"/></svg><svg style="left:37px;top:300px" width="10" height="10" viewBox="0 0 10 10"><rect x="0.4" y="0.4" width="9" height="9" fill="#fff" stroke="#b0b4ba" stroke-width="0.8"/><rect x="1.6" y="1.8" width="6.6" height="3.2" fill="#8fc6f2"/><rect x="1.6" y="5" width="6.6" height="2.6" fill="#3f8a5c"/></svg><span class="t" style="left:51.40px;top:297.00px;color:#000;letter-spacing:0.229px;">Изображения</span><svg style="left:31px;top:318px" width="13" height="16" viewBox="0 0 13 16"><path d="M5.6 0.4 H11.4 V6 H12.6 V14 H5.6 Z" fill="url(#gB)" stroke="#dfbf4e" stroke-width="0.7"/><path d="M0.4 0.4 H6.3 V15 L3.6 15.7 L0.4 14.8 Z" fill="url(#gF)" stroke="#e5cb66" stroke-width="0.7"/><rect x="3" y="1.5" width="1.1" height="6" fill="#fffbe6" opacity="0.9"/><rect x="10.6" y="8" width="1.1" height="3" fill="#f4f7fb"/><rect x="10.6" y="10.6" width="1.1" height="2.2" fill="#3d9be0"/></svg><svg style="left:37px;top:319px" width="9" height="13" viewBox="0 0 9 13"><rect x="0.4" y="0.4" width="8" height="12" fill="#fff" stroke="#a8acb2" stroke-width="0.8"/><rect x="3.6" y="2" width="2.6" height="2.6" fill="#3f8fe0"/><rect x="1.6" y="5.6" width="5.6" height="0.7" fill="#a9b0ba"/><rect x="1.6" y="7.199999999999999" width="5.6" height="0.7" fill="#a9b0ba"/><rect x="1.6" y="8.8" width="5.6" height="0.7" fill="#a9b0ba"/><rect x="1.6" y="10.4" width="5.6" height="0.7" fill="#a9b0ba"/><rect x="1.6" y="2.2" width="1.4" height="0.7" fill="#a9b0ba"/></svg><span class="t" style="left:51.40px;top:318.00px;color:#000;letter-spacing:0.322px;">Мои работы</span><svg style="left:31px;top:339px" width="13" height="16" viewBox="0 0 13 16"><path d="M5.6 0.4 H11.4 V6 H12.6 V14 H5.6 Z" fill="url(#gB)" stroke="#dfbf4e" stroke-width="0.7"/><path d="M0.4 0.4 H6.3 V15 L3.6 15.7 L0.4 14.8 Z" fill="url(#gF)" stroke="#e5cb66" stroke-width="0.7"/><rect x="3" y="1.5" width="1.1" height="6" fill="#fffbe6" opacity="0.9"/><rect x="10.6" y="8" width="1.1" height="3" fill="#f4f7fb"/><rect x="10.6" y="10.6" width="1.1" height="2.2" fill="#3d9be0"/></svg><svg style="left:37px;top:341px" width="9" height="12" viewBox="0 0 9 12"><path d="M5.2 0.4 V8.6" stroke="#1e8de6" stroke-width="1.5"/><path d="M5.2 0.6 C7.6 1.6 9 4 7.4 7.6" stroke="#1e8de6" stroke-width="1.4" fill="none"/><ellipse cx="3.2" cy="9.2" rx="2.8" ry="2.1" fill="#1e8de6"/></svg><span class="t" style="left:51.40px;top:339.00px;color:#000;letter-spacing:0.269px;">Музыка</span><svg style="left:31px;top:360px" width="13" height="16" viewBox="0 0 13 16"><path d="M5.6 0.4 H11.4 V6 H12.6 V14 H5.6 Z" fill="url(#gB)" stroke="#dfbf4e" stroke-width="0.7"/><path d="M0.4 0.4 H6.3 V15 L3.6 15.7 L0.4 14.8 Z" fill="url(#gF)" stroke="#e5cb66" stroke-width="0.7"/><rect x="3" y="1.5" width="1.1" height="6" fill="#fffbe6" opacity="0.9"/><rect x="10.6" y="8" width="1.1" height="3" fill="#f4f7fb"/><rect x="10.6" y="10.6" width="1.1" height="2.2" fill="#3d9be0"/></svg><svg style="left:37px;top:365px" width="10" height="9" viewBox="0 0 10 9"><rect x="0.3" y="0.3" width="9.2" height="7.6" fill="#2a5fd0" stroke="#6a7a9a" stroke-width="0.6"/><rect x="0.6" y="0.6" width="8.6" height="3" fill="#4f8cf0"/><rect x="0.3" y="6.8" width="9.2" height="1.4" fill="#1a1e2a"/><rect x="0.8" y="7" width="1.6" height="1" fill="#e04a2a"/></svg><span class="t" style="left:51.40px;top:360.00px;color:#000;letter-spacing:0.216px;">Рабочий стол</span><svg style="left:30px;top:383px" width="17" height="11" viewBox="0 0 17 11"><ellipse cx="8.5" cy="6.6" rx="8" ry="3.6" fill="#c6dbe2" stroke="#8fb0bc" stroke-width="0.8" transform="rotate(-10 8.5 6.6)"/><path d="M4.4 5 C5 1.6 8 0.2 10.6 1.4 C12 2.2 12.6 3.4 12.6 4.4 C10 6.6 6.4 6.8 4.4 5 Z" fill="#e2eef2" stroke="#9dbac4" stroke-width="0.7"/></svg><span class="t" style="left:51.40px;top:381.00px;color:#000;letter-spacing:0.048px;">Яндекс.Диск</span><svg style="left:30px;top:401px" width="17" height="17" viewBox="0 0 17 17"><rect x="1.2" y="0" width="3.7" height="3.7" fill="#00b6f0"/><rect x="5.5" y="0" width="3.7" height="3.7" fill="#00b6f0"/><rect x="1.2" y="4.3" width="3.7" height="3.7" fill="#00b6f0"/><rect x="5.5" y="4.3" width="3.7" height="3.7" fill="#00b6f0"/><path d="M2 9.2 H14 L16.2 11 V15 C16.2 15.8 15.6 16.2 15 16.2 H1.6 C1 16.2 0.4 15.8 0.4 15 V11 Z" fill="#aab2ba" stroke="#7d868e" stroke-width="0.6"/><rect x="1.4" y="11.4" width="13.8" height="3.6" rx="0.8" fill="#2e4f6e"/><rect x="12.4" y="12" width="1.4" height="2.4" fill="#45d83a"/></svg><span class="t" style="left:51.40px;top:402.00px;color:#000;letter-spacing:0.265px;">Локальный диск</span><svg style="left:30px;top:427px" width="17" height="11" viewBox="0 0 17 11"><rect x="0.4" y="0.8" width="10.4" height="9.4" fill="#e9ebee" stroke="#9a9ea4" stroke-width="0.8"/><circle cx="3.8" cy="3.8" r="1.5" fill="#5a4a3a"/><circle cx="7.4" cy="3.8" r="1.5" fill="#5a4a3a"/><path d="M1.4 9.4 C1.4 6.4 2.6 5.6 3.8 5.6 C5 5.6 6 6.4 6 9.4 Z" fill="#4cc47a"/><path d="M5.4 9.4 C5.4 6.4 6.4 5.6 7.6 5.6 C8.8 5.6 10 6.4 10 9.4 Z" fill="#3f9fe0"/><path d="M11 3.6 H15 L16.4 5 V10.2 H11 Z" fill="#d2d6da" stroke="#8c9096" stroke-width="0.7"/><rect x="12.6" y="6" width="2" height="2.8" fill="#3fc03a"/></svg><span class="t" style="left:51.40px;top:423.00px;color:#000;letter-spacing:-0.001px;">Big daddy (D:)</span><svg style="left:30px;top:448px" width="17" height="11" viewBox="0 0 17 11"><rect x="0.4" y="0.8" width="10.4" height="9.4" fill="#e9ebee" stroke="#9a9ea4" stroke-width="0.8"/><circle cx="3.8" cy="3.8" r="1.5" fill="#5a4a3a"/><circle cx="7.4" cy="3.8" r="1.5" fill="#5a4a3a"/><path d="M1.4 9.4 C1.4 6.4 2.6 5.6 3.8 5.6 C5 5.6 6 6.4 6 9.4 Z" fill="#4cc47a"/><path d="M5.4 9.4 C5.4 6.4 6.4 5.6 7.6 5.6 C8.8 5.6 10 6.4 10 9.4 Z" fill="#3f9fe0"/><path d="M11 3.6 H15 L16.4 5 V10.2 H11 Z" fill="#d2d6da" stroke="#8c9096" stroke-width="0.7"/><rect x="12.6" y="6" width="2" height="2.8" fill="#3fc03a"/></svg><span class="t" style="left:51.40px;top:444.00px;color:#000;letter-spacing:-0.173px;">Andrew Ryan (E:)</span><svg style="left:30px;top:469px" width="17" height="11" viewBox="0 0 17 11"><rect x="0.4" y="0.8" width="10.4" height="9.4" fill="#e9ebee" stroke="#9a9ea4" stroke-width="0.8"/><circle cx="3.8" cy="3.8" r="1.5" fill="#5a4a3a"/><circle cx="7.4" cy="3.8" r="1.5" fill="#5a4a3a"/><path d="M1.4 9.4 C1.4 6.4 2.6 5.6 3.8 5.6 C5 5.6 6 6.4 6 9.4 Z" fill="#4cc47a"/><path d="M5.4 9.4 C5.4 6.4 6.4 5.6 7.6 5.6 C8.8 5.6 10 6.4 10 9.4 Z" fill="#3f9fe0"/><path d="M11 3.6 H15 L16.4 5 V10.2 H11 Z" fill="#d2d6da" stroke="#8c9096" stroke-width="0.7"/><rect x="12.6" y="6" width="2" height="2.8" fill="#3fc03a"/></svg><span class="t" style="left:51.40px;top:465.00px;color:#000;letter-spacing:0.003px;">Frank Fontaine</span><svg style="left:19px;top:506px" width="18" height="17" viewBox="0 0 18 17"><circle cx="5.2" cy="5.6" r="5" fill="url(#gGl)"/><path d="M2 3.4 C3.5 1.6 5.4 2 5 3.8 C4.6 5 2.8 5.4 2 3.4 Z M3.4 8 C5 6.8 7 7.6 6.4 9.4 C5.4 10.4 3.8 9.8 3.4 8 Z" fill="#2fe04a"/><g transform="translate(7.2,4)"><rect x="0.5" y="0.5" width="9" height="7.800000000000001" fill="#d9dde2" stroke="#a4a9b0" stroke-width="0.9"/><rect x="1.8" y="1.7" width="6.4" height="5.200000000000001" fill="url(#gS)"/><rect x="4.0" y="8.8" width="2" height="1.6" fill="#9a9fa6"/><rect x="2.0" y="10.3" width="6" height="1.1" fill="#a8adb4"/></g></svg><span class="t" style="left:41.00px;top:507.00px;color:#000;letter-spacing:-0.145px;">Сеть</span><svg style="left:30px;top:528px" width="17" height="15" viewBox="0 0 17 15"><rect x="0.4" y="5" width="2.7" height="8.6" rx="0.8" fill="#d4d7db" stroke="#8c9096" stroke-width="0.7"/><rect x="1.1" y="6" width="1.3" height="1.3" fill="#35c035"/><g transform="translate(3.6,0)"><rect x="0.5" y="0.5" width="11.4" height="9.6" fill="#d9dde2" stroke="#a4a9b0" stroke-width="0.9"/><rect x="1.8" y="1.7" width="8.8" height="7.0" fill="url(#gS)"/><rect x="5.2" y="10.6" width="2" height="1.6" fill="#9a9fa6"/><rect x="3.2" y="12.1" width="6" height="1.1" fill="#a8adb4"/></g></svg><span class="t" style="left:51.40px;top:528.00px;color:#000;letter-spacing:-0.352px;">COMPUTER</span><svg style="left:30px;top:549px" width="17" height="15" viewBox="0 0 17 15"><rect x="0.4" y="5" width="2.7" height="8.6" rx="0.8" fill="#d4d7db" stroke="#8c9096" stroke-width="0.7"/><rect x="1.1" y="6" width="1.3" height="1.3" fill="#35c035"/><g transform="translate(3.6,0)"><rect x="0.5" y="0.5" width="11.4" height="9.6" fill="#d9dde2" stroke="#a4a9b0" stroke-width="0.9"/><rect x="1.8" y="1.7" width="8.8" height="7.0" fill="url(#gS)"/><rect x="5.2" y="10.6" width="2" height="1.6" fill="#9a9fa6"/><rect x="3.2" y="12.1" width="6" height="1.1" fill="#a8adb4"/></g></svg><span class="t" style="left:51.40px;top:549.00px;color:#000;letter-spacing:-1.052px;">SKESOV</span>
</div>
<div class="a" style="left:141px;top:184px;width:16px;height:591px;background:#efefef;"></div>
<div class="a" style="left:158px;top:184px;width:1px;height:591px;background:#f6f6f6;"></div>
<div class="a" style="left:141px;top:391px;width:15px;height:367px;background:#cdcdcd;"></div>
<svg style="left:145px;top:190px" width="7" height="6" viewBox="0 0 7 6"><path d="M0.6 5 L3.5 1.8 L6.4 5" stroke="#4a4a4a" stroke-width="2" fill="none"/></svg>
<svg style="left:145px;top:764px" width="7" height="6" viewBox="0 0 7 6"><path d="M0.6 1 L3.5 4.2 L6.4 1" stroke="#4a4a4a" stroke-width="2" fill="none"/></svg>
<span class="t" style="left:177.00px;top:189.00px;color:#4c607a;letter-spacing:0.531px;">Имя</span>
<span class="t" style="left:438.00px;top:189.00px;color:#4c607a;letter-spacing:0.113px;">Дата изменения</span>
<span class="t" style="left:558.50px;top:189.00px;color:#4c607a;letter-spacing:0.109px;">Тип</span>
<span class="t" style="left:678.20px;top:189.00px;color:#4c607a;letter-spacing:-0.005px;">Размер</span>
<div class="a" style="left:431px;top:184px;width:1px;height:23px;background:linear-gradient(#dde6f5,#e4ebf7 55%,#fff);"></div>
<div class="a" style="left:551px;top:184px;width:1px;height:23px;background:linear-gradient(#dde6f5,#e4ebf7 55%,#fff);"></div>
<div class="a" style="left:671px;top:184px;width:1px;height:23px;background:linear-gradient(#dde6f5,#e4ebf7 55%,#fff);"></div>
<div class="a" style="left:751px;top:184px;width:1px;height:23px;background:linear-gradient(#dde6f5,#e4ebf7 55%,#fff);"></div>
<svg style="left:297.5px;top:185.3px" width="7.5" height="3.6" viewBox="0 0 7.5 3.6"><path d="M0 3.6 L3.75 0 L7.5 3.6 Z" fill="#5d8fc4"/></svg>
<div class="a" style="left:174px;top:215px;width:574px;height:22px;box-sizing:border-box;background:#d1e8ff;border:1px solid #66a7e8;"></div>
<svg style="left:178px;top:217px" width="16" height="16" viewBox="0 0 16 16"><path d="M0.6 1 H9.5 L12.4 4 V15.4 H0.6 Z" fill="#fff" stroke="#555" stroke-width="1.1"/><path d="M9.2 1 V4.2 H12.4" fill="#fff" stroke="#555" stroke-width="0.9"/><rect x="2" y="1.6" width="1.1" height="1.3" fill="#555"/><rect x="4.2" y="1.6" width="1.1" height="1.3" fill="#555"/><rect x="6.4" y="1.6" width="1.1" height="1.3" fill="#555"/><rect x="2.3" y="4.6" width="5.5" height="0.8" fill="#c9ced6"/><rect x="2" y="6.6" width="9" height="7" fill="url(#gG)"/><path d="M8.3 12.6 L13.3 3.6" stroke="#f5a500" stroke-width="2.2"/><path d="M8.6 12.9 L7.6 14 L9.3 13.3 Z" fill="#5a3a10"/><path d="M13.5 3.3 L14.4 1.7" stroke="#7a8aa8" stroke-width="1.6"/><rect x="13.8" y="-0.2" width="2.2" height="2.2" fill="#a00010"/></svg>
<span class="t" style="left:198.30px;top:218.00px;color:#000;letter-spacing:0.250px;">3proxy.cfg</span>
<span class="t" style="left:437.80px;top:218.00px;color:#6d6d6d;letter-spacing:-0.314px;">31.10.2014 18:37</span>
<span class="t" style="left:558.70px;top:218.00px;color:#6d6d6d;letter-spacing:-0.062px;">Файл "CFG"</span>
<span class="t" style="left:721.70px;top:218.00px;color:#6d6d6d;letter-spacing:-0.561px;">1 КБ</span>
<span class="t" style="left:179.3px;top:239px;font-size:9px;line-height:10px;height:10px;color:#333;">3</span><svg style="left:185px;top:247px" width="6" height="6" viewBox="0 0 6 6"><path d="M0 0.5 H3.6 C5.6 0.5 5.7 3.7 3.6 3.7 H1.8" fill="none" stroke="#2e2e2e" stroke-width="1"/><path d="M1.5 0.5 V5.6" stroke="#2e2e2e" stroke-width="1.1"/><path d="M0 5.5 H3.8" stroke="#2e2e2e" stroke-width="1"/></svg>
<span class="t" style="left:198.30px;top:239.00px;color:#000;letter-spacing:-0.041px;">3proxy.exe</span>
<span class="t" style="left:437.80px;top:239.00px;color:#6d6d6d;letter-spacing:-0.323px;">03.07.2014 3:36</span>
<span class="t" style="left:558.70px;top:239.00px;color:#6d6d6d;letter-spacing:0.395px;">Приложение</span>
<span class="t" style="left:709.00px;top:239.00px;color:#6d6d6d;letter-spacing:-0.390px;">266 КБ</span>
<svg style="left:180px;top:260px" width="13" height="16" viewBox="0 0 13 16"><path d="M0.5 0.5 H9.0 L12.5 4.0 V15.5 H0.5 Z" fill="url(#gD)" stroke="#8c8c8c" stroke-width="1"/><path d="M9.0 0.5 V4.0 H12.5" fill="none" stroke="#9a9a9a" stroke-width="0.8"/></svg>
<span class="t" style="left:198.30px;top:260.00px;color:#000;letter-spacing:0.123px;">3proxy.key</span>
<span class="t" style="left:437.80px;top:260.00px;color:#6d6d6d;letter-spacing:-0.323px;">27.04.2012 2:00</span>
<span class="t" style="left:558.70px;top:260.00px;color:#6d6d6d;letter-spacing:-0.166px;">Файл "KEY"</span>
<span class="t" style="left:721.70px;top:260.00px;color:#6d6d6d;letter-spacing:-0.561px;">2 КБ</span>
<svg style="left:180px;top:281px" width="13" height="16" viewBox="0 0 13 16"><path d="M0.5 0.5 H9.0 L12.5 4.0 V15.5 H0.5 Z" fill="url(#gD)" stroke="#8c8c8c" stroke-width="1"/><path d="M9.0 0.5 V4.0 H12.5" fill="none" stroke="#9a9a9a" stroke-width="0.8"/></svg>
<span class="t" style="left:198.30px;top:281.00px;color:#000;letter-spacing:0.247px;">3proxy.pem</span>
<span class="t" style="left:437.80px;top:281.00px;color:#6d6d6d;letter-spacing:-0.323px;">27.04.2012 2:00</span>
<span class="t" style="left:558.70px;top:281.00px;color:#6d6d6d;letter-spacing:0.014px;">Файл "PEM"</span>
<span class="t" style="left:721.70px;top:281.00px;color:#6d6d6d;letter-spacing:-0.561px;">2 КБ</span>
<span class="t" style="left:179.3px;top:302px;font-size:9px;line-height:10px;height:10px;color:#333;">3</span><svg style="left:185px;top:310px" width="6" height="6" viewBox="0 0 6 6"><path d="M0 0.5 H3.6 C5.6 0.5 5.7 3.7 3.6 3.7 H1.8" fill="none" stroke="#2e2e2e" stroke-width="1"/><path d="M1.5 0.5 V5.6" stroke="#2e2e2e" stroke-width="1.1"/><path d="M0 5.5 H3.8" stroke="#2e2e2e" stroke-width="1"/></svg>
<span class="t" style="left:198.30px;top:302.00px;color:#000;letter-spacing:0.166px;">countersutil.exe</span>
<span class="t" style="left:437.80px;top:302.00px;color:#6d6d6d;letter-spacing:-0.323px;">03.07.2014 3:36</span>
<span class="t" style="left:558.70px;top:302.00px;color:#6d6d6d;letter-spacing:0.395px;">Приложение</span>
<span class="t" style="left:715.30px;top:302.00px;color:#6d6d6d;letter-spacing:-0.447px;">90 КБ</span>
<span class="t" style="left:179.3px;top:323px;font-size:9px;line-height:10px;height:10px;color:#333;">3</span><svg style="left:185px;top:331px" width="6" height="6" viewBox="0 0 6 6"><path d="M0 0.5 H3.6 C5.6 0.5 5.7 3.7 3.6 3.7 H1.8" fill="none" stroke="#2e2e2e" stroke-width="1"/><path d="M1.5 0.5 V5.6" stroke="#2e2e2e" stroke-width="1.1"/><path d="M0 5.5 H3.8" stroke="#2e2e2e" stroke-width="1"/></svg>
<span class="t" style="left:198.30px;top:323.00px;color:#000;letter-spacing:0.018px;">dighosts.exe</span>
<span class="t" style="left:437.80px;top:323.00px;color:#6d6d6d;letter-spacing:-0.323px;">03.07.2014 3:36</span>
<span class="t" style="left:558.70px;top:323.00px;color:#6d6d6d;letter-spacing:0.395px;">Приложение</span>
<span class="t" style="left:709.00px;top:323.00px;color:#6d6d6d;letter-spacing:-0.390px;">128 КБ</span>
<svg style="left:180px;top:344px" width="13" height="16" viewBox="0 0 13 16"><path d="M0.5 0.5 H9.0 L12.5 4.0 V15.5 H0.5 Z" fill="url(#gD)" stroke="#8c8c8c" stroke-width="1"/><path d="M9.0 0.5 V4.0 H12.5" fill="none" stroke="#9a9a9a" stroke-width="0.8"/><circle cx="5.2" cy="7.4" r="1.9" fill="none" stroke="#1f6acb" stroke-width="1.3" stroke-dasharray="1.2 0.5"/><circle cx="7.9" cy="10.2" r="1.9" fill="none" stroke="#2b78d8" stroke-width="1.3" stroke-dasharray="1.2 0.5"/></svg>
<span class="t" style="left:198.30px;top:344.00px;color:#000;letter-spacing:0.200px;">FilePlugin.dll</span>
<span class="t" style="left:437.80px;top:344.00px;color:#6d6d6d;letter-spacing:-0.323px;">03.07.2014 3:36</span>
<span class="t" style="left:558.70px;top:344.00px;color:#6d6d6d;letter-spacing:0.184px;">Расширение при...</span>
<span class="t" style="left:715.30px;top:344.00px;color:#6d6d6d;letter-spacing:-0.447px;">55 КБ</span>
<svg style="left:180px;top:365px" width="13" height="16" viewBox="0 0 13 16"><path d="M0.5 0.5 H9.0 L12.5 4.0 V15.5 H0.5 Z" fill="url(#gD)" stroke="#8c8c8c" stroke-width="1"/><path d="M9.0 0.5 V4.0 H12.5" fill="none" stroke="#9a9a9a" stroke-width="0.8"/><circle cx="5.2" cy="7.4" r="1.9" fill="none" stroke="#1f6acb" stroke-width="1.3" stroke-dasharray="1.2 0.5"/><circle cx="7.9" cy="10.2" r="1.9" fill="none" stroke="#2b78d8" stroke-width="1.3" stroke-dasharray="1.2 0.5"/></svg>
<span class="t" style="left:198.30px;top:365.00px;color:#000;letter-spacing:0.141px;">lastFripper.dll</span>
<span class="t" style="left:437.80px;top:365.00px;color:#6d6d6d;letter-spacing:-0.323px;">03.07.2014 3:36</span>
<span class="t" style="left:558.70px;top:365.00px;color:#6d6d6d;letter-spacing:0.184px;">Расширение при...</span>
<span class="t" style="left:715.30px;top:365.00px;color:#6d6d6d;letter-spacing:-0.447px;">59 КБ</span>
<span class="t" style="left:179.3px;top:386px;font-size:9px;line-height:10px;height:10px;color:#333;">3</span><svg style="left:185px;top:394px" width="6" height="6" viewBox="0 0 6 6"><path d="M0 0.5 H3.6 C5.6 0.5 5.7 3.7 3.6 3.7 H1.8" fill="none" stroke="#2e2e2e" stroke-width="1"/><path d="M1.5 0.5 V5.6" stroke="#2e2e2e" stroke-width="1.1"/><path d="M0 5.5 H3.8" stroke="#2e2e2e" stroke-width="1"/></svg>
<span class="t" style="left:198.30px;top:386.00px;color:#000;letter-spacing:0.118px;">mycrypt.exe</span>
<span class="t" style="left:437.80px;top:386.00px;color:#6d6d6d;letter-spacing:-0.323px;">03.07.2014 3:36</span>
<span class="t" style="left:558.70px;top:386.00px;color:#6d6d6d;letter-spacing:0.395px;">Приложение</span>
<span class="t" style="left:715.30px;top:386.00px;color:#6d6d6d;letter-spacing:-0.447px;">82 КБ</span>
<svg style="left:180px;top:407px" width="13" height="16" viewBox="0 0 13 16"><path d="M0.5 0.5 H9.0 L12.5 4.0 V15.5 H0.5 Z" fill="url(#gD)" stroke="#8c8c8c" stroke-width="1"/><path d="M9.0 0.5 V4.0 H12.5" fill="none" stroke="#9a9a9a" stroke-width="0.8"/><circle cx="5.2" cy="7.4" r="1.9" fill="none" stroke="#1f6acb" stroke-width="1.3" stroke-dasharray="1.2 0.5"/><circle cx="7.9" cy="10.2" r="1.9" fill="none" stroke="#2b78d8" stroke-width="1.3" stroke-dasharray="1.2 0.5"/></svg>
<span class="t" style="left:198.30px;top:407.00px;color:#000;letter-spacing:-0.116px;">PCREPlugin.dll</span>
<span class="t" style="left:437.80px;top:407.00px;color:#6d6d6d;letter-spacing:-0.323px;">03.07.2014 3:36</span>
<span class="t" style="left:558.70px;top:407.00px;color:#6d6d6d;letter-spacing:0.184px;">Расширение при...</span>
<span class="t" style="left:709.00px;top:407.00px;color:#6d6d6d;letter-spacing:-0.390px;">154 КБ</span>
<svg style="left:180px;top:428px" width="13" height="16" viewBox="0 0 13 16"><path d="M0.5 0.5 H9.0 L12.5 4.0 V15.5 H0.5 Z" fill="url(#gD)" stroke="#8c8c8c" stroke-width="1"/><path d="M9.0 0.5 V4.0 H12.5" fill="none" stroke="#9a9a9a" stroke-width="0.8"/></svg>
<span class="t" style="left:198.30px;top:428.00px;color:#000;letter-spacing:0.166px;">rus-koi8-r.3ps</span>
<span class="t" style="left:437.80px;top:428.00px;color:#6d6d6d;letter-spacing:-0.208px;">11.11.2010 16:14</span>
<span class="t" style="left:558.70px;top:428.00px;color:#6d6d6d;letter-spacing:-0.037px;">Файл "3PS"</span>
<span class="t" style="left:721.70px;top:428.00px;color:#6d6d6d;letter-spacing:-0.561px;">9 КБ</span>
<svg style="left:180px;top:449px" width="13" height="16" viewBox="0 0 13 16"><path d="M0.5 0.5 H9.0 L12.5 4.0 V15.5 H0.5 Z" fill="url(#gD)" stroke="#8c8c8c" stroke-width="1"/><path d="M9.0 0.5 V4.0 H12.5" fill="none" stroke="#9a9a9a" stroke-width="0.8"/></svg>
<span class="t" style="left:198.30px;top:449.00px;color:#000;letter-spacing:0.007px;">rus-win1251.3ps</span>
<span class="t" style="left:437.80px;top:449.00px;color:#6d6d6d;letter-spacing:-0.208px;">11.11.2010 16:13</span>
<span class="t" style="left:558.70px;top:449.00px;color:#6d6d6d;letter-spacing:-0.037px;">Файл "3PS"</span>
<span class="t" style="left:721.70px;top:449.00px;color:#6d6d6d;letter-spacing:-0.561px;">9 КБ</span>
<svg style="left:180px;top:470px" width="13" height="16" viewBox="0 0 13 16"><path d="M0.5 0.5 H9.0 L12.5 4.0 V15.5 H0.5 Z" fill="url(#gD)" stroke="#8c8c8c" stroke-width="1"/><path d="M9.0 0.5 V4.0 H12.5" fill="none" stroke="#9a9a9a" stroke-width="0.8"/></svg>
<span class="t" style="left:198.30px;top:470.00px;color:#000;letter-spacing:-0.112px;">server.key</span>
<span class="t" style="left:437.80px;top:470.00px;color:#6d6d6d;letter-spacing:-0.323px;">16.04.2012 2:36</span>
<span class="t" style="left:558.70px;top:470.00px;color:#6d6d6d;letter-spacing:-0.166px;">Файл "KEY"</span>
<span class="t" style="left:721.70px;top:470.00px;color:#6d6d6d;letter-spacing:-0.561px;">2 КБ</span>
<svg style="left:180px;top:491px" width="13" height="16" viewBox="0 0 13 16"><path d="M0.5 0.5 H9.0 L12.5 4.0 V15.5 H0.5 Z" fill="url(#gD)" stroke="#8c8c8c" stroke-width="1"/><path d="M9.0 0.5 V4.0 H12.5" fill="none" stroke="#9a9a9a" stroke-width="0.8"/><circle cx="5.2" cy="7.4" r="1.9" fill="none" stroke="#1f6acb" stroke-width="1.3" stroke-dasharray="1.2 0.5"/><circle cx="7.9" cy="10.2" r="1.9" fill="none" stroke="#2b78d8" stroke-width="1.3" stroke-dasharray="1.2 0.5"/></svg>
<span class="t" style="left:198.30px;top:491.00px;color:#000;letter-spacing:0.137px;">StringsPlugin.dll</span>
<span class="t" style="left:437.80px;top:491.00px;color:#6d6d6d;letter-spacing:-0.323px;">03.07.2014 3:35</span>
<span class="t" style="left:558.70px;top:491.00px;color:#6d6d6d;letter-spacing:0.184px;">Расширение при...</span>
<span class="t" style="left:715.30px;top:491.00px;color:#6d6d6d;letter-spacing:-0.447px;">58 КБ</span>
<svg style="left:180px;top:512px" width="13" height="16" viewBox="0 0 13 16"><path d="M0.5 0.5 H9.0 L12.5 4.0 V15.5 H0.5 Z" fill="url(#gD)" stroke="#8c8c8c" stroke-width="1"/><path d="M9.0 0.5 V4.0 H12.5" fill="none" stroke="#9a9a9a" stroke-width="0.8"/><circle cx="5.2" cy="7.4" r="1.9" fill="none" stroke="#1f6acb" stroke-width="1.3" stroke-dasharray="1.2 0.5"/><circle cx="7.9" cy="10.2" r="1.9" fill="none" stroke="#2b78d8" stroke-width="1.3" stroke-dasharray="1.2 0.5"/></svg>
<span class="t" style="left:198.30px;top:512.00px;color:#000;letter-spacing:0.295px;">TrafficPlugin.dll</span>
<span class="t" style="left:437.80px;top:512.00px;color:#6d6d6d;letter-spacing:-0.323px;">03.07.2014 3:35</span>
<span class="t" style="left:558.70px;top:512.00px;color:#6d6d6d;letter-spacing:0.184px;">Расширение при...</span>
<span class="t" style="left:715.30px;top:512.00px;color:#6d6d6d;letter-spacing:-0.447px;">64 КБ</span>
<svg style="left:180px;top:533px" width="13" height="16" viewBox="0 0 13 16"><path d="M0.5 0.5 H9.0 L12.5 4.0 V15.5 H0.5 Z" fill="url(#gD)" stroke="#8c8c8c" stroke-width="1"/><path d="M9.0 0.5 V4.0 H12.5" fill="none" stroke="#9a9a9a" stroke-width="0.8"/><circle cx="5.2" cy="7.4" r="1.9" fill="none" stroke="#1f6acb" stroke-width="1.3" stroke-dasharray="1.2 0.5"/><circle cx="7.9" cy="10.2" r="1.9" fill="none" stroke="#2b78d8" stroke-width="1.3" stroke-dasharray="1.2 0.5"/></svg>
<span class="t" style="left:198.30px;top:533.00px;color:#000;letter-spacing:0.162px;">utf8tocp1251.dll</span>
<span class="t" style="left:437.80px;top:533.00px;color:#6d6d6d;letter-spacing:-0.323px;">03.07.2014 3:35</span>
<span class="t" style="left:558.70px;top:533.00px;color:#6d6d6d;letter-spacing:0.184px;">Расширение при...</span>
<span class="t" style="left:715.30px;top:533.00px;color:#6d6d6d;letter-spacing:-0.447px;">32 КБ</span>
<svg style="left:180px;top:554px" width="13" height="16" viewBox="0 0 13 16"><path d="M0.5 0.5 H9.0 L12.5 4.0 V15.5 H0.5 Z" fill="url(#gD)" stroke="#8c8c8c" stroke-width="1"/><path d="M9.0 0.5 V4.0 H12.5" fill="none" stroke="#9a9a9a" stroke-width="0.8"/><circle cx="5.2" cy="7.4" r="1.9" fill="none" stroke="#1f6acb" stroke-width="1.3" stroke-dasharray="1.2 0.5"/><circle cx="7.9" cy="10.2" r="1.9" fill="none" stroke="#2b78d8" stroke-width="1.3" stroke-dasharray="1.2 0.5"/></svg>
<span class="t" style="left:198.30px;top:554.00px;color:#000;letter-spacing:0.366px;">WindowsAuthentication.dll</span>
<span class="t" style="left:437.80px;top:554.00px;color:#6d6d6d;letter-spacing:-0.323px;">03.07.2014 3:35</span>
<span class="t" style="left:558.70px;top:554.00px;color:#6d6d6d;letter-spacing:0.184px;">Расширение при...</span>
<span class="t" style="left:715.30px;top:554.00px;color:#6d6d6d;letter-spacing:-0.447px;">56 КБ</span>
<span class="t" style="left:22.00px;top:779.00px;color:#17263f;letter-spacing:-0.036px;">Элементов: 17</span>
<div class="a" style="left:110px;top:780px;width:1px;height:14px;background:#e2e2e2;"></div>
<span class="t" style="left:121.00px;top:779.00px;color:#17263f;letter-spacing:0.044px;">Выбран 1 элемент: 19 байт</span>
<div class="a" style="left:278px;top:780px;width:1px;height:14px;background:#e2e2e2;"></div>
<span class="t" style="left:289.50px;top:779.00px;color:#17263f;letter-spacing:-0.008px;">Состояние:</span>
<svg style="left:353px;top:779px" width="17" height="16" viewBox="0 0 17 16"><circle cx="5" cy="4" r="2.6" fill="#7a5a3c"/><path d="M0.6 12.6 C0.6 8.6 2.4 7.2 5 7.2 C7.6 7.2 9.4 8.6 9.4 12.6 Z" fill="#4ab86a"/><circle cx="11.6" cy="5.4" r="2.7" fill="#8a6844"/><path d="M6.8 15 C6.8 10.6 8.8 9 11.6 9 C14.4 9 16.4 10.6 16.4 15 Z" fill="#3f8fd8"/></svg>
<span class="t" style="left:374.50px;top:779.00px;color:#17263f;letter-spacing:0.270px;">Общий доступ</span>
<div class="a" style="left:465px;top:780px;width:1px;height:14px;background:#e2e2e2;"></div>
<div class="a" style="left:892px;top:775px;width:22px;height:23px;box-sizing:border-box;background:#cce4f7;border:1px solid #3ca0e0;"></div>
<svg style="left:897px;top:780px" width="14" height="12" viewBox="0 0 14 12"><rect x="0.4" y="0.4" width="3.2" height="3.2" fill="#fff" stroke="#8a9aa8" stroke-width="0.6"/><rect x="1.2" y="1.2" width="1.6" height="1.6" fill="#3a9a3a"/><rect x="5.6" y="1.5" width="3.6" height="1" fill="#3a4654"/><rect x="10.2" y="1.5" width="3.4" height="1" fill="#3a4654"/><rect x="0.4" y="4.4" width="3.2" height="3.2" fill="#fff" stroke="#8a9aa8" stroke-width="0.6"/><rect x="1.2" y="5.2" width="1.6" height="1.6" fill="#d02a2a"/><rect x="5.6" y="5.5" width="3.6" height="1" fill="#3a4654"/><rect x="10.2" y="5.5" width="3.4" height="1" fill="#3a4654"/><rect x="0.4" y="8.4" width="3.2" height="3.2" fill="#fff" stroke="#8a9aa8" stroke-width="0.6"/><rect x="1.2" y="9.2" width="1.6" height="1.6" fill="#2a5fd0"/><rect x="5.6" y="9.5" width="3.6" height="1" fill="#3a4654"/><rect x="10.2" y="9.5" width="3.4" height="1" fill="#3a4654"/></svg>
<svg style="left:918px;top:780px" width="15" height="12" viewBox="0 0 15 12"><rect x="0.5" y="0.5" width="13.6" height="10.6" fill="#fff" stroke="#5a7aa8" stroke-width="0.9"/><rect x="1.8" y="1.8" width="11" height="4.6" fill="#8ec4ea"/><rect x="1.8" y="6.2" width="11" height="3.6" fill="#1e4a3a"/></svg>
<svg style="left:0;top:0" width="948" height="806" viewBox="0 0 948 806"><defs><filter id="ol" filterUnits="userSpaceOnUse" x="640" y="724" width="304" height="76" color-interpolation-filters="sRGB"><feMorphology in="SourceAlpha" operator="dilate" radius="1.25" result="d"/><feMorphology in="SourceAlpha" operator="erode" radius="1.25" result="e"/><feComposite in="d" in2="e" operator="out" result="ring"/><feGaussianBlur in="ring" stdDeviation="0.75" result="rb"/><feFlood flood-color="#888888" flood-opacity="0.6" result="gc"/><feComposite in="gc" in2="rb" operator="in" result="ringc"/><feFlood flood-color="#ffffff" flood-opacity="0.25" result="wc"/><feComposite in="wc" in2="e" operator="in" result="fillc"/><feMerge><feMergeNode in="fillc"/><feMergeNode in="ringc"/></feMerge></filter></defs><g filter="url(#ol)"><path d="M686.4 751.5 V746.5 Q686.4 738 677.9 738 H663.7 Q655.2 738 655.2 746.5 V753.0 Q655.2 761.5 663.7 761.5 H677.9 Q686.4 761.5 686.4 770.0 V776.5 Q686.4 785 677.9 785 H663.7 Q655.2 785 655.2 776.5 V769.5" fill="none" stroke="#000" stroke-width="8.4" stroke-linecap="butt" stroke-linejoin="round"/></g><g filter="url(#ol)"><path d="M697.4 733.8 V789.2" fill="none" stroke="#000" stroke-width="8.4" stroke-linecap="butt" stroke-linejoin="round"/><polygon points="701,762.5 713.5,749 724.5,749 706.5,767.5 725.5,789.2 714.5,789.2 701,773" fill="#000"/></g><g filter="url(#ol)"><path d="M730.2 768.8 H757.8 V762 Q757.8 753 748.8 753 H739.2 Q730.2 753 730.2 762 V776 Q730.2 785 739.2 785 H748.8 Q757.8 785 757.8 778 V776.5" fill="none" stroke="#000" stroke-width="8.4" stroke-linecap="butt" stroke-linejoin="round"/></g><g filter="url(#ol)"><path d="M789.8 761.5 V760 Q789.8 753 782.8 753 H773.6 Q766.6 753 766.6 760 V762 Q766.6 769 773.6 769 H782.8 Q789.8 769 789.8 776 V778 Q789.8 785 782.8 785 H773.6 Q766.6 785 766.6 778 V776.5" fill="none" stroke="#000" stroke-width="8.4" stroke-linecap="butt" stroke-linejoin="round"/></g><g filter="url(#ol)"><path d="M808.2 753 H817.4 Q826.4 753 826.4 762 V776 Q826.4 785 817.4 785 H808.2 Q799.2 785 799.2 776 V762 Q799.2 753 808.2 753 Z" fill="none" stroke="#000" stroke-width="8.4" stroke-linecap="butt" stroke-linejoin="round"/></g><g filter="url(#ol)"><polygon points="829.8,749 839.2,749 847.6,777 856,749 865.3,749 852.5,789.2 842.7,789.2" fill="#000"/></g><g filter="url(#ol)"><rect x="864.4" y="779.4" width="8.2" height="9.8" rx="1" fill="#000"/></g><g filter="url(#ol)"><path d="M876.7 789.2 V762 Q876.7 753 885.7 753 H886.5 Q894.9 753 894.9 761.5 V764.5" fill="none" stroke="#000" stroke-width="8.4" stroke-linecap="butt" stroke-linejoin="round"/></g><g filter="url(#ol)"><path d="M904.9 749 V776 Q904.9 785 913.9 785 H920.7 Q929.7 785 929.7 776 V749" fill="none" stroke="#000" stroke-width="8.4" stroke-linecap="butt" stroke-linejoin="round"/></g></svg>
</body></html>
